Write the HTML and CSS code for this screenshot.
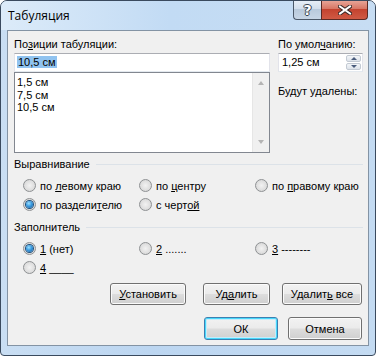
FILE: index.html
```html
<!DOCTYPE html>
<html lang="ru">
<head>
  <meta charset="UTF-8" />
  <title>Табуляция</title>
  <link rel="stylesheet" href="styles.css">
</head>
<body>
  <div class="window">
    <div class="titlebar">
      <span class="title">Табуляция</span>
      <div class="caption">
        <span class="cap help">?</span>
        <span class="cap close">
          <svg width="14" height="10" viewBox="0 0 14 10">
            <path d="M2 1.5 L12 8.5 M12 1.5 L2 8.5" stroke="#3a2a28" stroke-width="4" stroke-linecap="square" fill="none"/>
            <path d="M2 1.5 L12 8.5 M12 1.5 L2 8.5" stroke="#fff" stroke-width="2" stroke-linecap="square" fill="none"/>
          </svg>
        </span>
      </div>
    </div>

    <div class="client">
      <div class="top">
        <div class="col-left">
          <div class="lbl">По<u>з</u>иции табуляции:</div>
          <div class="edit"><span class="sel">10,5 см</span></div>
          <div class="listbox">
            <div class="items">
              <div>1,5 см</div>
              <div>7,5 см</div>
              <div>10,5 см</div>
            </div>
            <div class="vscroll">
              <span class="arr up"></span>
              <span class="arr down"></span>
            </div>
          </div>
        </div>
        <div class="col-right">
          <div class="lbl">По умол<u>ч</u>анию:</div>
          <div class="spin">
            <span class="spin-val">1,25 см</span>
            <div class="spin-btns">
              <span class="sb up"></span>
              <span class="sb down"></span>
            </div>
          </div>
          <div class="lbl removed">Будут удалены:</div>
        </div>
      </div>

      <div class="group-title first"><span>Выравнивание</span></div>
      <div class="radios">
        <label class="radio"><span class="dot"></span><span>по <u>л</u>евому краю</span></label>
        <label class="radio"><span class="dot"></span><span>по <u>ц</u>ентру</span></label>
        <label class="radio"><span class="dot"></span><span>по <u>п</u>равому краю</span></label>
        <label class="radio"><span class="dot on"></span><span>по раздели<u>т</u>елю</span></label>
        <label class="radio"><span class="dot"></span><span>с черт<u>ой</u></span></label>
      </div>

      <div class="group-title"><span>Заполнитель</span></div>
      <div class="radios">
        <label class="radio"><span class="dot on"></span><span><u>1</u> (нет)</span></label>
        <label class="radio"><span class="dot"></span><span><u>2</u> .......</span></label>
        <label class="radio"><span class="dot"></span><span><u>3</u> --------</span></label>
        <label class="radio"><span class="dot"></span><span><u>4</u> ____</span></label>
      </div>

      <div class="btn-row row1">
        <button class="btn set"><u>У</u>становить</button>
        <button class="btn del">Уд<u>а</u>лить</button>
        <button class="btn delall">Удалит<u>ь</u> все</button>
      </div>
      <div class="btn-row row2">
        <button class="btn ok">ОК</button>
        <button class="btn cancel">Отмена</button>
      </div>
    </div>
  </div>
</body>
</html>
```

FILE: styles.css
```css
* {
  box-sizing: border-box;
  margin: 0;
  padding: 0;
}

body {
  font-family: 'Liberation Sans', Arial, sans-serif;
  font-size: 11px;
  color: #000;
  background: #fff;
}

u {
  text-decoration: underline;
  text-underline-offset: 1px;
}

.window {
  width: 376px;
  height: 356px;
  border: 1px solid #3a4a5e;
  border-radius: 7px 7px 4px 4px;
  background: linear-gradient(to right, #c9def3 0%, #bcd6f1 40%, #c4dbf2 100%);
  display: flex;
  flex-direction: column;
  overflow: hidden;
}

.titlebar {
  height: 29px;
  display: flex;
  justify-content: space-between;
  align-items: flex-start;
  background: linear-gradient(to right, #dcebf9 0%, #c2dbf4 45%, #c7ddf3 100%);
}

.title {
  font-family: 'Open Sans', 'Liberation Sans', sans-serif;
  font-size: 12px;
  margin: 6px 0 0 7px;
  color: #000;
}

.caption {
  display: flex;
  margin-right: 7px;
  margin-top: -1px;
}

.cap {
  height: 20px;
  display: flex;
  align-items: center;
  justify-content: center;
  border: 1px solid #4b5868;
  border-top: none;
}

.help {
  width: 28px;
  border-right: none;
  border-radius: 0 0 0 4px;
  background: linear-gradient(to bottom, #e9f0f8 0%, #d3dfec 45%, #b9cadc 50%, #c7d6e6 100%);
  color: #fff;
  font: bold 14px 'DejaVu Sans', sans-serif;
  text-shadow: 0 0 1px #3b4652, 1px 0 0 #3b4652, -1px 0 0 #3b4652, 0 1px 0 #3b4652, 0 -1px 0 #3b4652;
}

.close {
  width: 47px;
  border-color: #5a2a24;
  border-radius: 0 0 4px 0;
  background: linear-gradient(to bottom, #e9a99c 0%, #d87765 45%, #c4432f 50%, #d05a44 100%);
}

.client {
  flex: 1;
  margin: 0 6px 9px 6px;
  border: 1px solid #8393a4;
  background: #f0f0f0;
  padding: 7px 5px 0 6px;
}

.top {
  display: grid;
  grid-template-columns: 256px 85px;
  column-gap: 8px;
}

.lbl {
  height: 13px;
  line-height: 13px;
  margin-bottom: 2px;
}

.edit {
  height: 19px;
  border: 1px solid #abadb3;
  border-color: #abadb3 #e2e3ea #e3e9ef #e2e3ea;
  background: #fff;
  padding: 2px 0 0 2px;
  line-height: 13px;
}

.sel {
  background: #90c3f0;
  padding: 0 1px;
}

.listbox {
  height: 81px;
  border: 1px solid #828790;
  background: #fff;
  display: flex;
}

.items {
  flex: 1;
  padding: 3px 0 0 2px;
  line-height: 12.5px;
}

.vscroll {
  width: 17px;
  background: #f0f0f0;
  border-left: 1px solid #e6e6e6;
  display: flex;
  flex-direction: column;
  justify-content: space-between;
  align-items: center;
  padding: 8px 0 8px;
}

.arr {
  width: 0;
  height: 0;
  border-left: 3.5px solid transparent;
  border-right: 3.5px solid transparent;
}

.arr.up {
  border-bottom: 4px solid #b4b4b4;
}

.arr.down {
  border-top: 4px solid #b4b4b4;
}

.spin {
  height: 19px;
  border: 1px solid #abadb3;
  border-color: #abadb3 #e2e3ea #e3e9ef #e2e3ea;
  background: #fff;
  display: flex;
  justify-content: space-between;
}

.spin-val {
  padding: 2px 0 0 3px;
  line-height: 13px;
}

.spin-btns {
  width: 15px;
  margin: 1px 1px 1px 0;
  display: flex;
  flex-direction: column;
  gap: 1px;
}

.sb {
  flex: 1;
  border: 1px solid #c3cad3;
  border-radius: 2px;
  background: linear-gradient(to bottom, #f3f5f8, #dde3ea);
  display: flex;
  align-items: center;
  justify-content: center;
}

.sb::after {
  content: '';
  border-left: 3px solid transparent;
  border-right: 3px solid transparent;
}

.sb.up::after {
  border-bottom: 3px solid #4a5c7c;
}

.sb.down::after {
  border-top: 3px solid #4a5c7c;
}

.removed {
  margin-top: 13px;
}

.group-title {
  height: 13px;
  line-height: 13px;
  margin-top: 7px;
  display: flex;
  align-items: center;
}

.group-title.first {
  margin-top: 5px;
}

.group-title::after {
  content: '';
  flex: 1;
  margin-left: 6px;
  border-top: 1px solid #dce2e8;
}

.radios {
  display: grid;
  grid-template-columns: 116px 116px auto;
  grid-auto-rows: 19px;
  padding-left: 9px;
  margin-top: 5px;
}

.radio {
  display: flex;
  align-items: center;
  gap: 4px;
  white-space: nowrap;
}

.dot {
  width: 13px;
  height: 13px;
  border-radius: 50%;
  border: 1px solid #8e9193;
  background: radial-gradient(circle at 50% 50%, #f2f2f2 0%, #e0e0e0 55%, #cfcfcf 100%);
  display: flex;
  align-items: center;
  justify-content: center;
  flex-shrink: 0;
}

.dot.on::after {
  content: '';
  width: 7px;
  height: 7px;
  border-radius: 50%;
  background: radial-gradient(circle at 40% 35%, #9be0ff 0%, #3b9be0 45%, #145a9a 100%);
  box-shadow: 0 0 0 1px #1d4f7c;
}

.btn-row {
  display: flex;
  justify-content: flex-end;
  margin-right: 1px;
}

.row1 {
  margin-top: 6px;
}

.row2 {
  margin-top: 12px;
}

.btn {
  height: 22px;
  font-family: inherit;
  font-size: 11px;
  color: #000;
  border: 1px solid #707070;
  border-radius: 3px;
  background: linear-gradient(to bottom, #f2f2f2 0%, #ebebeb 48%, #dddddd 52%, #cfcfcf 100%);
  box-shadow: inset 0 0 0 1px #fbfbfb;
}

.set {
  width: 76px;
}

.del {
  width: 67px;
  margin-left: 17px;
}

.delall {
  width: 80px;
  margin-left: 12px;
}

.row2 .btn {
  height: 23px;
  width: 74px;
}

.ok {
  border-color: #3c7fb1;
  box-shadow: inset 0 0 0 1px #48d8fb, inset 0 0 0 2px #c6ecfb;
}

.cancel {
  margin-left: 10px;
}
```
